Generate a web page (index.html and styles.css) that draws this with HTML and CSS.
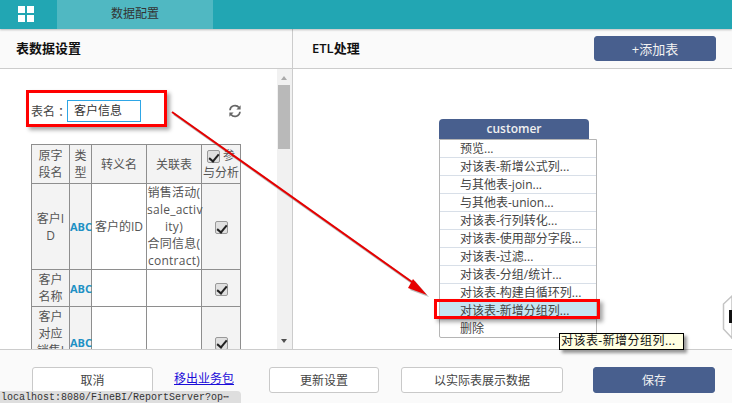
FILE: index.html
```html
<!DOCTYPE html>
<html lang="zh-CN">
<head>
<meta charset="utf-8">
<title>数据配置</title>
<link rel="stylesheet" href="styles.css">
</head>
<body>
<div class="app">
  <header class="topbar">
    <div class="home">
      <span class="grid-icon"><i></i><i></i><i></i><i></i></span>
    </div>
    <div class="tab">数据配置</div>
  </header>
  <main class="panes">
    <section class="left">
      <div class="pane-head"><h2>表数据设置</h2></div>
      <div class="left-body">
        <div class="scroll-content">
          <div class="name-row">
            <label class="name-label">表名&nbsp;：</label>
            <div class="name-input">客户信息</div>
            <svg class="refresh" viewBox="0 0 14 14" width="14" height="14">
              <path d="M2 6.2A5 5 0 0 1 11 3.6" fill="none" stroke="#666" stroke-width="1.7"/>
              <path d="M12.6 1.2V5.4H8.4Z" fill="#666"/>
              <path d="M12 7.8A5 5 0 0 1 3 10.4" fill="none" stroke="#666" stroke-width="1.7"/>
              <path d="M1.4 12.8V8.6H5.6Z" fill="#666"/>
            </svg>
          </div>
          <table class="fields">
            <colgroup><col class="c1"><col class="c2"><col class="c3"><col class="c4"><col class="c5"></colgroup>
            <tr class="head">
              <th class="name">原字段名</th><th>类型</th><th>转义名</th><th>关联表</th>
              <th><span class="check"></span> 参与分析</th>
            </tr>
            <tr>
              <td class="shade name">客户ID</td><td class="shade abc">ABC</td><td>客户的ID</td>
              <td class="rel">销售活动(<br>sale_activ<br>ity)<br>合同信息(<br>contract)</td>
              <td class="shade"><span class="check"></span></td>
            </tr>
            <tr>
              <td class="shade name">客户名称</td><td class="shade abc">ABC</td><td></td><td></td>
              <td class="shade"><span class="check"></span></td>
            </tr>
            <tr>
              <td class="shade name">客户对应销售ID</td><td class="shade abc">ABC</td><td></td><td></td>
              <td class="shade"><span class="check"></span></td>
            </tr>
          </table>
        </div>
        <div class="scrollbar">
          <span class="arrow up"></span>
          <span class="thumb"></span>
          <span class="arrow down"></span>
        </div>
      </div>
    </section>
    <section class="right">
      <div class="pane-head">
        <h2>ETL处理</h2>
        <button class="btn primary add">+添加表</button>
      </div>
      <div class="canvas">
        <div class="node">
          <div class="node-title">customer</div>
          <ul class="menu">
            <li>预览...</li>
            <li>对该表-新增公式列...</li>
            <li>与其他表-join...</li>
            <li>与其他表-union...</li>
            <li>对该表-行列转化...</li>
            <li>对该表-使用部分字段...</li>
            <li>对该表-过滤...</li>
            <li>对该表-分组/统计...</li>
            <li>对该表-构建自循环列...</li>
            <li class="active">对该表-新增分组列...</li>
            <li>删除</li>
          </ul>
        </div>
        <div class="hex"><svg viewBox="0 0 10 44" width="10" height="44"><path d="M10 1 L1.500 9 V34 L10 43 V44 H10 Z" fill="#fff" stroke="#c4c4c4" stroke-width="1.500"/><rect x="7" y="15" width="3" height="13" fill="#111"/></svg></div>
      </div>
    </section>
  </main>
  <footer class="footer">
    <button class="btn cancel">取消</button>
    <a class="remove" href="#">移出业务包</a>
    <button class="btn update">更新设置</button>
    <button class="btn real">以实际表展示数据</button>
    <button class="btn primary save">保存</button>
  </footer>
</div>

<div class="status">localhost:8080/FineBI/ReportServer?op⋯</div>
<div class="tooltip">对该表-新增分组列...</div>
<div class="red-box box-name"></div>
<div class="red-box box-item"></div>
<svg class="arrows" viewBox="0 0 732 403" width="732" height="403">
  <g class="arrow-shadow">
    <path d="M174 114 L414 284" fill="none" stroke="#777" stroke-width="2.500"/>
    <path d="M429 297 L410 290 L415 281 Z" fill="#777"/>
  </g>
  <path d="M172 112 L412 282" fill="none" stroke="#e60000" stroke-width="2"/>
  <path d="M427 295 L408 288 L413 279 Z" fill="#e60000"/>
</svg>
</body>
</html>
```

FILE: styles.css
```css
* { box-sizing: border-box; }
html, body { margin: 0; padding: 0; width: 732px; height: 403px; overflow: hidden; }
body {
  position: relative;
  font-family: "Open Sans", "Noto Sans CJK SC", sans-serif;
  font-size: 12px;
  color: #333;
  background: #fff;
}
.app { display: flex; flex-direction: column; height: 403px; }

.topbar {
  display: flex;
  height: 29px;
  flex: none;
  background: #22a6b3;
  box-shadow: 0 1px 2px rgba(0,0,0,.25);
  position: relative;
}
.home { width: 57px; display: flex; align-items: center; padding-left: 18px; }
.grid-icon { display: grid; grid-template-columns: 7px 7px; grid-template-rows: 7px 7px; gap: 2px; margin-top: -1px; }
.grid-icon i { background: #fff; display: block; }
.tab {
  width: 156px;
  background: #50b8c2;
  text-align: center;
  line-height: 28px;
  color: #333;
}

.panes { display: flex; height: 320px; flex: none; }
.left { width: 293px; flex: none; border-right: 1px solid #ccc; display: flex; flex-direction: column; }
.right { flex: 1; display: flex; flex-direction: column; min-width: 0; }
.pane-head {
  height: 40px;
  flex: none;
  background: #fafafa;
  border-bottom: 1px solid #ccc;
  display: flex;
  align-items: center;
  justify-content: space-between;
  padding-left: 16px;
}
.right .pane-head { padding: 0 16px 0 19px; }
.pane-head h2 { margin: -3px 0 0; font-size: 13px; font-weight: 600; color: #111; }

.left-body { flex: 1; display: flex; min-height: 0; }
.scroll-content { flex: 1; overflow: hidden; padding: 31px 0 0 31px; }
.name-row { display: flex; align-items: center; height: 22px; }
.name-label { width: 36px; flex: none; color: #444; white-space: nowrap; }
.name-input {
  width: 74px;
  height: 22px;
  border: 1px solid #2ea6e6;
  line-height: 20px;
  padding-left: 6px;
  color: #333;
}
.refresh { margin-left: 87px; }

.fields {
  margin-top: 22px;
  border-collapse: collapse;
  table-layout: fixed;
  width: 209px;
  color: #555;
  line-height: 17px;
}
.c1 { width: 38px; } .c2 { width: 22px; } .c3 { width: 55px; } .c4 { width: 55px; } .c5 { width: 39px; }
.fields th, .fields td {
  border: 1px solid #8e8e8e;
  padding: 1px 0;
  text-align: center;
  word-break: break-all;
  font-weight: normal;
}
.fields th, .fields .shade { background: #f3f3f3; }
.fields .head th { padding: 2px 0; }
.fields .head th.name { padding: 2px 3px; }
.fields td.name { padding: 0 3px; }
.fields td.abc { color: #2090c4; font-weight: 700; font-size: 11px; padding: 0; text-align: center; white-space: nowrap; }
.fields td.rel { white-space: nowrap; letter-spacing: .25px; padding: 0; }
.fields tr:nth-child(n+3) td.name { padding: 1px 3px; }
.check {
  display: inline-block;
  width: 13px;
  height: 13px;
  border: 1px solid #999;
  border-radius: 2px;
  background: #e0e0e0;
  position: relative;
  vertical-align: middle;
}
.check::after {
  content: "";
  position: absolute;
  left: 3.500px;
  top: 0.500px;
  width: 4px;
  height: 8px;
  border: solid #222;
  border-width: 0 2px 2px 0;
  transform: rotate(40deg);
}

.scrollbar {
  width: 15px;
  flex: none;
  background: #f1f1f1;
  position: relative;
  display: flex;
  flex-direction: column;
  align-items: center;
}
.thumb { position: absolute; left: 1px; top: 16px; width: 12px; height: 64px; background: #b9b9b9; }
.arrow { position: absolute; left: 4px; width: 0; height: 0; border-left: 3.500px solid transparent; border-right: 3.500px solid transparent; }
.arrow.up { top: 7px; border-bottom: 4px solid #a9a9a9; }
.arrow.down { bottom: 6px; border-top: 4px solid #505050; }

.btn {
  font: inherit;
  border-radius: 3px;
  border: 1px solid #c9c9c9;
  background: #fff;
  color: #444;
  padding: 0;
  height: 26px;
}
.btn.primary { background: #485f8e; border-color: #485f8e; color: #f2f2f2; }
.add { width: 122px; height: 25px; margin-top: -1px; font-size: 13px; }

.canvas { flex: 1; position: relative; overflow: hidden; }
.node { position: absolute; left: 146px; top: 50px; width: 158px; }
.node-title {
  width: 150px;
  height: 20px;
  background: #485f8e;
  color: #f0f0f0;
  border-radius: 4px 4px 0 0;
  text-align: center;
  line-height: 20px;
  font-weight: 600;
}
.menu {
  list-style: none;
  margin: 0;
  padding: 0;
  width: 158px;
  height: 199px;
  border: 1px solid #b5b5b5;
  border-radius: 0 0 2px 2px;
  background: #fff;
}
.menu li {
  height: 18px;
  line-height: 17px;
  padding-left: 20px;
  border-bottom: 1px solid #d8dfe8;
  color: #444;
  white-space: nowrap;
}
.menu li:last-child { border-bottom: 0; }
.menu li.active { background: #c5e5f2; }
.hex { position: absolute; right: 0; top: 226px; line-height: 0; }

.footer {
  flex: 1;
  background: #fafafa;
  border-top: 1px solid #ccc;
  display: flex;
  align-items: flex-start;
  padding: 17px 0 0 32px;
}
.cancel { width: 121px; }
.remove { margin-left: 21px; width: 60px; line-height: 24px; color: #1a0dd8; white-space: nowrap; }
.update { width: 110px; margin-left: 35px; }
.real { width: 162px; margin-left: 22px; }
.save { width: 122px; margin-left: 30px; }

.status {
  position: absolute;
  left: 0;
  bottom: 0;
  width: 241px;
  height: 12px;
  background: #dedede;
  border-radius: 0 4px 0 0;
  font: 10px/14px "Liberation Mono", "DejaVu Sans Mono", monospace;
  color: #333;
  padding-left: 1px;
  overflow: hidden;
  white-space: nowrap;
}
.tooltip {
  position: absolute;
  left: 559px;
  top: 333px;
  width: 125px;
  height: 17px;
  background: #ffffe1;
  border: 1px solid #000;
  box-shadow: 3px 3px 3px rgba(0,0,0,.4);
  color: #111;
  line-height: 14px;
  padding-left: 1px;
  letter-spacing: .45px;
  white-space: nowrap;
  overflow: hidden;
}
.red-box {
  position: absolute;
  border: 3px solid #f00;
  box-shadow: 3px 3px 4px rgba(0,0,0,.35);
}
.box-name { left: 26px; top: 90px; width: 141px; height: 37px; }
.box-item { left: 434px; top: 299px; width: 166px; height: 20px; }
.arrows { position: absolute; left: 0; top: 0; pointer-events: none; }
.arrow-shadow { opacity: .5; }
```
